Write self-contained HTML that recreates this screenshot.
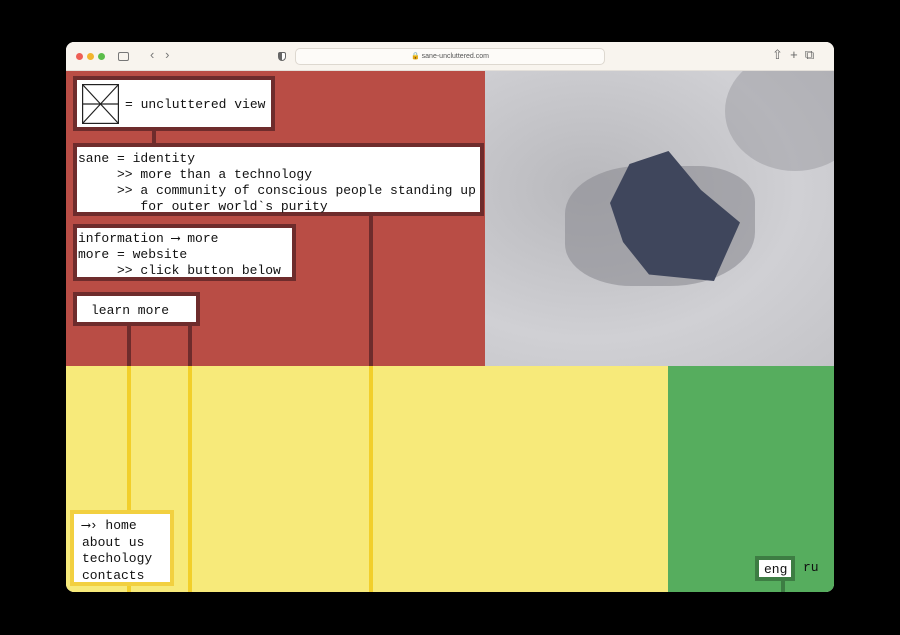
<!DOCTYPE html>
<html><head><meta charset="utf-8"><style>
*{margin:0;padding:0;box-sizing:border-box}
body{width:900px;height:635px;background:#000;position:relative;overflow:hidden;font-family:"Liberation Mono",monospace}
.win{position:absolute;left:66px;top:42px;width:768px;height:550px;border-radius:8px;overflow:hidden;background:#fbf7f1}
.bar{position:absolute;left:0;top:0;width:768px;height:29px;background:#f8f4ee;border-bottom:1px solid #e4e0da}
.dot{position:absolute;top:11px;width:7px;height:7px;border-radius:50%}
.url{position:absolute;left:229px;top:6px;width:310px;height:17px;border:1px solid #ddd8d0;border-radius:5px;background:#fdfbf8;font:7px "Liberation Sans",sans-serif;color:#555;text-align:center;line-height:15px}
.abs{position:absolute}
.red{left:0;top:29px;width:419px;height:295px;background:#b94d45}
.img{left:419px;top:29px;width:349px;height:295px;background:radial-gradient(ellipse at 30% 40%,#b8b8bc,#d0d0d4 60%,#c4c4c8);overflow:hidden}
.yel{left:0;top:324px;width:602px;height:226px;background:#f7ea7a}
.grn{left:602px;top:324px;width:166px;height:226px;background:#56ad5e}
.box{position:absolute;background:#fff;border:4px solid #6e2c2c;font-size:13px;line-height:16px;color:#111;white-space:pre}
.vl{position:absolute;width:4px}
</style></head><body>
<div class="win">
<div class="bar">
<div class="dot" style="left:10px;background:#ee5e55"></div>
<div class="dot" style="left:21px;background:#f2b52f"></div>
<div class="dot" style="left:32px;background:#5bbd4a"></div>
<div class="abs" style="left:52px;top:10px;width:11px;height:9px;border:1px solid #777;border-radius:2px"></div>
<div class="abs" style="left:84px;top:5px;font:13px 'Liberation Sans';color:#777">‹&nbsp;&nbsp;&nbsp;›</div>
<div class="abs" style="left:212px;top:10px;width:8px;height:9px;border:1px solid #666;border-radius:2px 2px 4px 4px;background:linear-gradient(90deg,#666 50%,#fff 50%)"></div>
<div class="url">🔒 sane-uncluttered.com</div>
<div class="abs" style="left:706px;top:5px;font:13px 'Liberation Sans';color:#666">⇧&nbsp;&nbsp;+&nbsp;&nbsp;⧉</div>
</div>
<div class="abs red"></div>
<div class="abs img">
<div class="abs" style="left:240px;top:-20px;width:140px;height:120px;background:#9a9aa0;border-radius:50%;opacity:.5"></div>
<div class="abs" style="left:80px;top:95px;width:190px;height:120px;background:#8c8c92;border-radius:40% 30% 45% 35%;opacity:.6"></div>
<div class="abs" style="left:125px;top:80px;width:130px;height:130px;background:#3f465c;clip-path:polygon(15% 10%,45% 0,70% 30%,100% 55%,80% 100%,30% 95%,10% 70%,0 40%)"></div>
</div>
<div class="abs yel"></div>
<div class="abs grn"></div>
<div class="vl" style="left:303px;top:170px;height:154px;background:#6e2c2c"></div>
<div class="vl" style="left:303px;top:324px;height:226px;background:#f2cf2a"></div>
<div class="vl" style="left:61px;top:280px;height:44px;background:#6e2c2c"></div>
<div class="vl" style="left:61px;top:324px;height:226px;background:#f2cf2a"></div>
<div class="vl" style="left:122px;top:280px;height:44px;background:#6e2c2c"></div>
<div class="vl" style="left:122px;top:324px;height:226px;background:#f2cf2a"></div>
<div class="vl" style="left:86px;top:86px;height:20px;background:#6e2c2c"></div>
<div class="box" style="left:7px;top:34px;width:202px;height:55px;padding:0">
<svg class="abs" style="left:5px;top:4px" width="37" height="40"><g stroke="#222" fill="none" stroke-width="1.2"><rect x=".6" y=".6" width="35.8" height="38.8"/><path d="M.6 .6L36.4 39.4M36.4 .6L.6 39.4M.6 20H36.4"/></g></svg>
<span class="abs" style="left:48px;top:17px">= uncluttered view</span></div>
<div class="box" style="left:7px;top:101px;width:411px;height:73px;padding:4px 0 0 1px">sane = identity
     &gt;&gt; more than a technology
     &gt;&gt; a community of conscious people standing up
        for outer world`s purity</div>
<div class="box" style="left:7px;top:182px;width:223px;height:57px;padding:3px 0 0 1px">information ⟶ more
more = website
     &gt;&gt; click button below</div>
<div class="box" style="left:7px;top:250px;width:127px;height:34px;padding:7px 0 0 14px">learn more</div>
<div class="box" style="left:4px;top:468px;width:104px;height:76px;padding:4px 0 0 8px;border-color:#f2d040;line-height:16.7px">⟶› home
about us
techology
contacts</div>
<div class="vl" style="left:715px;top:535px;height:15px;background:#3d7d43"></div>
<div class="box" style="left:689px;top:514px;width:40px;height:25px;padding:2px 0 0 5px;border-color:#3d7d43">eng</div>
<div class="abs" style="left:737px;top:518px;font-size:13px;color:#111">ru</div>
</div>
</body></html>
